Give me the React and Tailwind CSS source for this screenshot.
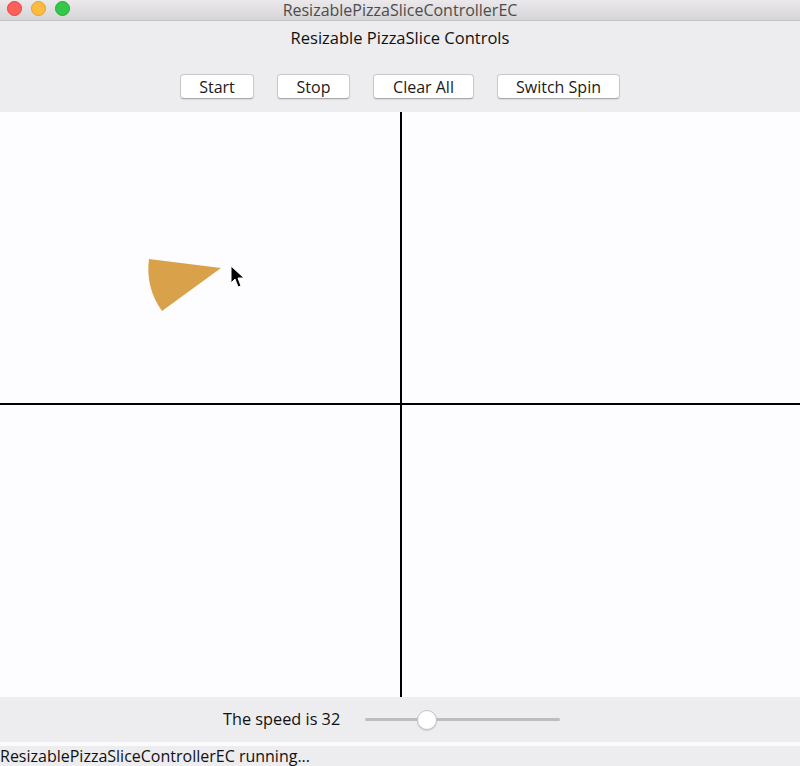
import React from 'react';

const font = { fontFamily: '"Open Sans", "DejaVu Sans", sans-serif' };

const Button = ({ label, w }) => (
    <button
        className={`${w} h-[25px] rounded-[4px] bg-white border border-[#c9c8cb] border-b-[#a9a8ab] shadow-[0_1px_1px_rgba(0,0,0,0.08)] text-[16px] text-[#1a1a1a] flex items-center justify-center leading-none`}
    >
        {label}
    </button>
);

export default function App() {
    return (
        <div className="w-[800px] h-[766px] flex flex-col bg-[#edecee] overflow-hidden" style={font}>
            {/* window title bar */}
            <div className="relative h-[21px] flex items-center justify-center bg-gradient-to-b from-[#ebe9eb] to-[#d6d4d6] border-b border-[#c3c1c3]">
                <div className="absolute left-[7px] top-[1px] flex gap-[9px]">
                    <span className="w-[15px] h-[15px] rounded-full bg-[#fc605b] border border-[#e0443e]" />
                    <span className="w-[15px] h-[15px] rounded-full bg-[#fdbc40] border border-[#de9f34]" />
                    <span className="w-[15px] h-[15px] rounded-full bg-[#34c84a] border border-[#27aa35]" />
                </div>
                <span className="text-[16px] text-[#4c4c4c] leading-none">ResizablePizzaSliceControllerEC</span>
            </div>

            {/* controls */}
            <div className="h-[91px] flex flex-col items-center">
                <div className="h-[17px] mt-[9px] flex items-center text-[16.5px] text-[#111] leading-none">
                    Resizable PizzaSlice Controls
                </div>
                <div className="mt-[27px] flex gap-[23px]">
                    <Button label="Start" w="w-[74px]" />
                    <Button label="Stop" w="w-[73px]" />
                    <Button label="Clear All" w="w-[101px]" />
                    <Button label="Switch Spin" w="w-[123px]" />
                </div>
            </div>

            {/* drawing canvas */}
            <div className="h-[585px] bg-[#fdfcff] grid grid-cols-[402px_1fr] grid-rows-[293px_1fr]">
                <div className="relative border-r-2 border-b-2 border-black">
                    <svg className="absolute left-0 top-0" width="260" height="200" viewBox="0 0 260 200">
                        <path
                            d="M221 156 L149 147 A73 73 0 0 0 162 199 Z"
                            fill="#d9a24a"
                        />
                        <path
                            d="M231 154 L231 171 L235 167 L238 175 L241 174 L238 166 L244 166 Z"
                            fill="#000"
                            stroke="#fff"
                            strokeWidth="1"
                            strokeLinejoin="round"
                        />
                    </svg>
                </div>
                <div className="border-b-2 border-black" />
                <div className="border-r-2 border-black" />
                <div />
            </div>

            {/* speed slider */}
            <div className="h-[45px] flex items-center">
                <span className="ml-[223px] w-[142px] text-[16.3px] text-[#111] leading-none">The speed is 32</span>
                <div className="relative w-[195px] h-[20px] flex items-center">
                    <div className="w-full h-[3px] rounded-full bg-[#bdbcbe]" />
                    <div className="absolute left-[52px] top-0 w-[20px] h-[20px] rounded-full bg-white border border-[#c4c3c6] shadow-[0_1px_1px_rgba(0,0,0,0.15)]" />
                </div>
            </div>

            <div className="h-[4px] bg-[#fbfafc]" />

            {/* status */}
            <div className="h-[20px] flex items-center text-[16px] text-[#111] leading-none">
                ResizablePizzaSliceControllerEC running...
            </div>
        </div>
    );
}
